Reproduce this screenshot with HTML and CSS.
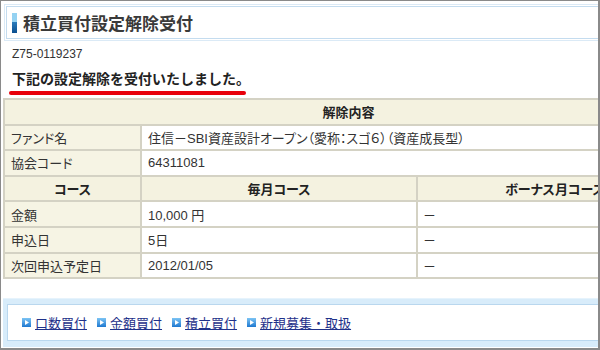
FILE: index.html
```html
<!DOCTYPE html>
<html lang="ja">
<head>
    <meta charset="UTF-8">
    <title>積立買付設定解除受付</title>
    <link rel="stylesheet" href="styles.css">
</head>
<body>
    <div class="frame">
        <div class="page">
            <div class="heading">
                <div class="heading-inner">
                    <span class="heading-bar"></span>
                    <h1>積立買付設定解除受付</h1>
                </div>
            </div>

            <p class="order-no">Z75-0119237</p>
            <p class="notice">下記の設定解除を受付いたしました。</p>
            <div class="notice-line"></div>

            <table class="detail">
                <colgroup>
                    <col class="col-label">
                    <col class="col-value">
                    <col class="col-value">
                </colgroup>
                <tr><th colspan="3" class="head">解除内容</th></tr>
                <tr>
                    <th class="label">ファンド名</th>
                    <td colspan="2">住信－SBI資産設計オープン（愛称：スゴ６）（資産成長型）</td>
                </tr>
                <tr>
                    <th class="label">協会コード</th>
                    <td colspan="2">64311081</td>
                </tr>
                <tr>
                    <th class="head">コース</th>
                    <th class="head">毎月コース</th>
                    <th class="head">ボーナス月コース</th>
                </tr>
                <tr>
                    <th class="label">金額</th>
                    <td>10,000 円</td>
                    <td>－</td>
                </tr>
                <tr>
                    <th class="label">申込日</th>
                    <td>5日</td>
                    <td>－</td>
                </tr>
                <tr>
                    <th class="label">次回申込予定日</th>
                    <td>2012/01/05</td>
                    <td>－</td>
                </tr>
            </table>

            <div class="menu">
                <div class="menu-inner">
                    <a href="#" class="menu-link"><svg class="arrow" width="9" height="9" viewBox="0 0 9 9"><defs><linearGradient id="ag" x1="0" y1="0" x2="0" y2="1"><stop offset="0" stop-color="#7cc4f4"/><stop offset="1" stop-color="#1f78d0"/></linearGradient></defs><rect width="9" height="9" fill="url(#ag)"/><polygon points="3,2 7,4.5 3,7" fill="#fff"/></svg><span>口数買付</span></a>
                    <a href="#" class="menu-link"><svg class="arrow" width="9" height="9" viewBox="0 0 9 9"><rect width="9" height="9" fill="url(#ag)"/><polygon points="3,2 7,4.5 3,7" fill="#fff"/></svg><span>金額買付</span></a>
                    <a href="#" class="menu-link"><svg class="arrow" width="9" height="9" viewBox="0 0 9 9"><rect width="9" height="9" fill="url(#ag)"/><polygon points="3,2 7,4.5 3,7" fill="#fff"/></svg><span>積立買付</span></a>
                    <a href="#" class="menu-link"><svg class="arrow" width="9" height="9" viewBox="0 0 9 9"><rect width="9" height="9" fill="url(#ag)"/><polygon points="3,2 7,4.5 3,7" fill="#fff"/></svg><span>新規募集・取扱</span></a>
                </div>
            </div>
        </div>
    </div>
</body>
</html>
```

FILE: styles.css
```css
body {
    margin: 0;
    font-family: "Liberation Sans", "Noto Sans CJK JP", sans-serif;
    color: #333;
    background: #fff;
}
.frame {
    width: 600px;
    height: 350px;
    box-sizing: border-box;
    border: 1px solid #8a8a8a;
    border-right-width: 2px;
    border-bottom-width: 2px;
    overflow: hidden;
}
.page {
    width: 700px;
    padding: 3px 0 0 1px;
}

/* heading */
.heading {
    margin-left: 2px;
    border: 1px solid #dbeaf6;
    padding: 1px;
}
.heading-inner {
    border: 1px solid #c4dcef;
    height: 31px;
    display: flex;
    align-items: center;
    padding-left: 5px;
}
.heading-bar {
    width: 5px;
    height: 20px;
    margin-right: 6px;
    background: linear-gradient(#94d2f2 0, #94d2f2 45%, #2a7cbc 45%, #0b4f8f 100%);
}
h1 {
    margin: 0;
    font-size: 17px;
    font-weight: bold;
    color: #3a3a3a;
}

.order-no {
    margin: 6px 0 0 10px;
    font-size: 12px;
    line-height: 14px;
}
.notice {
    margin: 8px 0 0 10px;
    font-size: 14px;
    font-weight: bold;
    line-height: 20px;
    color: #222;
}
.notice-line {
    width: 237px;
    height: 4px;
    margin: 2px 0 0 7px;
    border-radius: 2px;
    background-color: #e8000b;
}

/* detail table */
.detail {
    margin: 3px 0 0 1px;
    border-collapse: collapse;
    table-layout: fixed;
    width: 690px;
    font-size: 13px;
    font-feature-settings: "palt";
}
.col-label { width: 137px; }
.col-value { width: 276px; }
.detail th,
.detail td {
    border: 2px solid #d4d2c4;
    height: 23.6px;
    padding: 0 6px;
    text-align: left;
    font-weight: normal;
    white-space: nowrap;
}
.detail td:last-child:not([colspan]) { padding-left: 5px; }
.detail .label { background-color: #f6f4e4; }
.detail .head {
    background-color: #f4f2e0;
    text-align: center;
    font-weight: bold;
    color: #222;
}

/* bottom menu */
.menu {
    margin: 19px 0 0 1px;
    padding: 5px 0 6px 4px;
    background-color: #d8ecfa;
    border-top: 1px solid #e6f3fc;
}
.menu-inner {
    height: 35px;
    display: flex;
    align-items: center;
    gap: 10px;
    padding-left: 14px;
    background-color: #fff;
    border: 1px solid #b9d7ee;
}
.menu-link {
    display: flex;
    align-items: center;
    gap: 4px;
    font-size: 13px;
    color: #1f318a;
    text-decoration: underline;
}
.arrow { display: block; }
```
